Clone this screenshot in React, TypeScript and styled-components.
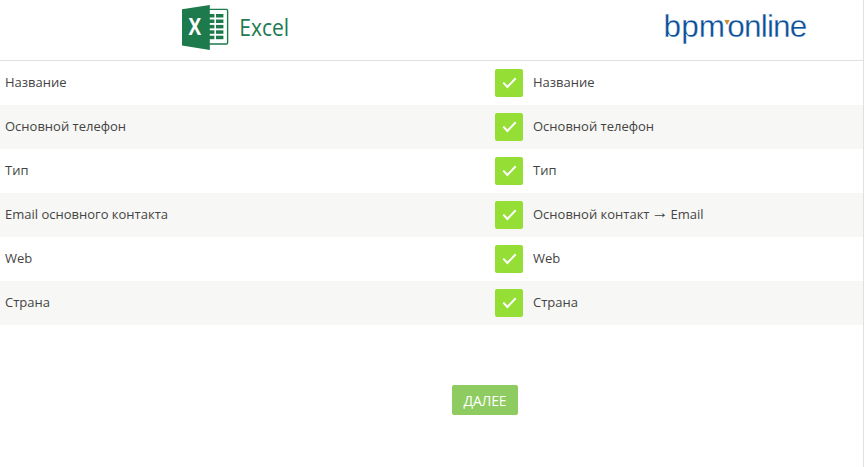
import React from "react";
import styled, { createGlobalStyle } from "styled-components";

const GlobalStyle = createGlobalStyle`
  * { box-sizing: border-box; }
  body { margin: 0; background: #fff; overflow: hidden; }
`;

const Page = styled.main`
  width: 864px;
  height: 467px;
  background: #fff;
  border-right: 1px solid #e1e1df;
  font-family: "Open Sans", "Noto Sans", sans-serif;
  font-size: 13px;
  color: #444;
`;

const Header = styled.header`
  display: grid;
  grid-template-columns: 495px 1fr;
  height: 61px;
  border-bottom: 1px solid #e1e1df;
`;

const ExcelBrand = styled.div`
  padding: 4px 0 0 181px;
  svg { overflow: visible; }
`;

const BpmBrand = styled.div`
  padding: 8px 0 0 168px;
`;

const Row = styled.div<{ $shaded: boolean }>`
  display: grid;
  grid-template-columns: 490px 28px 1fr;
  align-items: center;
  height: 44px;
  padding-left: 5px;
  background: ${(p) => (p.$shaded ? "#f7f7f5" : "#fff")};
`;

const Label = styled.span`
  line-height: 18px;
  padding-bottom: 2px;
  white-space: pre;
`;

const SourceLabel = styled(Label)``;

const TargetLabel = styled(Label)`
  display: flex;
  padding-left: 10px;
`;

const Arrow = styled.span`
  width: 21px;
  text-align: center;
  font-family: "Liberation Serif", serif;
  font-size: 17px;
  line-height: 15px;
`;

const Check = styled.span`
  display: block;
  width: 28px;
  height: 28px;
  border-radius: 2px;
  background: #95de36;
  svg { display: block; }
`;

const Footer = styled.footer`
  padding: 60px 0 0 452px;
`;

const NextButton = styled.button`
  display: block;
  width: 66px;
  height: 30px;
  padding: 2px 0 0;
  border: 0;
  border-radius: 2px;
  background: #8ecb60;
  color: #fff;
  font: 14px/20px "Open Sans", "Noto Sans", sans-serif;
  letter-spacing: -0.2px;
`;

const ExcelLogo = () => (
  <svg width="140" height="47" viewBox="181 4 140 47">
    <rect x="207" y="9.4" width="20.6" height="34.6" rx="1.2" fill="#fff" stroke="#1d7a4c" strokeWidth="1.4" />
    {[14, 19.5, 24.9, 30.3, 35.7].map((y) => (
      <g key={y} fill="#1d7a4c">
        <rect x="209" y={y} width="5.4" height="3.5" />
        <rect x="216" y={y} width="7.4" height="3.5" />
      </g>
    ))}
    <path d="M182 9.2 209.8 5V50L182 45.6Z" fill="#1d7a4c" />
    <text x="188.6" y="35" fill="#fff" fontFamily="Open Sans" fontWeight="700" fontSize="23.2" textLength="12.6" lengthAdjust="spacingAndGlyphs">X</text>
    <text x="239.2" y="36" fill="#217a50" fontFamily="Open Sans" fontSize="23.5" textLength="50" lengthAdjust="spacingAndGlyphs">Excel</text>
  </svg>
);

const BpmLogo = () => (
  <svg width="146" height="44" viewBox="663 8 146 44">
    <g fill="#0b509a" stroke="#fff" strokeWidth="0.3" fontFamily="Liberation Sans" fontSize="31.5">
      <text x="663.5" y="37.2" textLength="61.5" lengthAdjust="spacing">bpm</text>
      <text x="727.3" y="37.2" textLength="80" lengthAdjust="spacing">online</text>
    </g>
    <path d="M724.3 20H729.7L727 25Z" fill="#c98c36" />
  </svg>
);

const fields: [string, string[]][] = [
  ["Название", ["Название"]],
  ["Основной телефон", ["Основной телефон"]],
  ["Тип", ["Тип"]],
  ["Email основного контакта", ["Основной контакт", "Email"]],
  ["Web", ["Web"]],
  ["Страна", ["Страна"]],
];

export default function App() {
  return (
    <Page>
      <GlobalStyle />
      <Header>
        <ExcelBrand>
          <ExcelLogo />
        </ExcelBrand>
        <BpmBrand>
          <BpmLogo />
        </BpmBrand>
      </Header>
      {fields.map(([source, path], i) => (
        <Row key={source} $shaded={i % 2 === 1}>
          <SourceLabel>{source}</SourceLabel>
          <Check>
            <svg width="28" height="28" viewBox="0 0 28 28">
              <path d="M8.3 13.6 12.4 18 20.7 9.2" fill="none" stroke="#fff" strokeWidth="2" />
            </svg>
          </Check>
          <TargetLabel>
            {path.map((part, n) => (
              <React.Fragment key={part}>
                {n > 0 && <Arrow>→</Arrow>}
                {part}
              </React.Fragment>
            ))}
          </TargetLabel>
        </Row>
      ))}
      <Footer>
        <NextButton>ДАЛЕЕ</NextButton>
      </Footer>
    </Page>
  );
}
